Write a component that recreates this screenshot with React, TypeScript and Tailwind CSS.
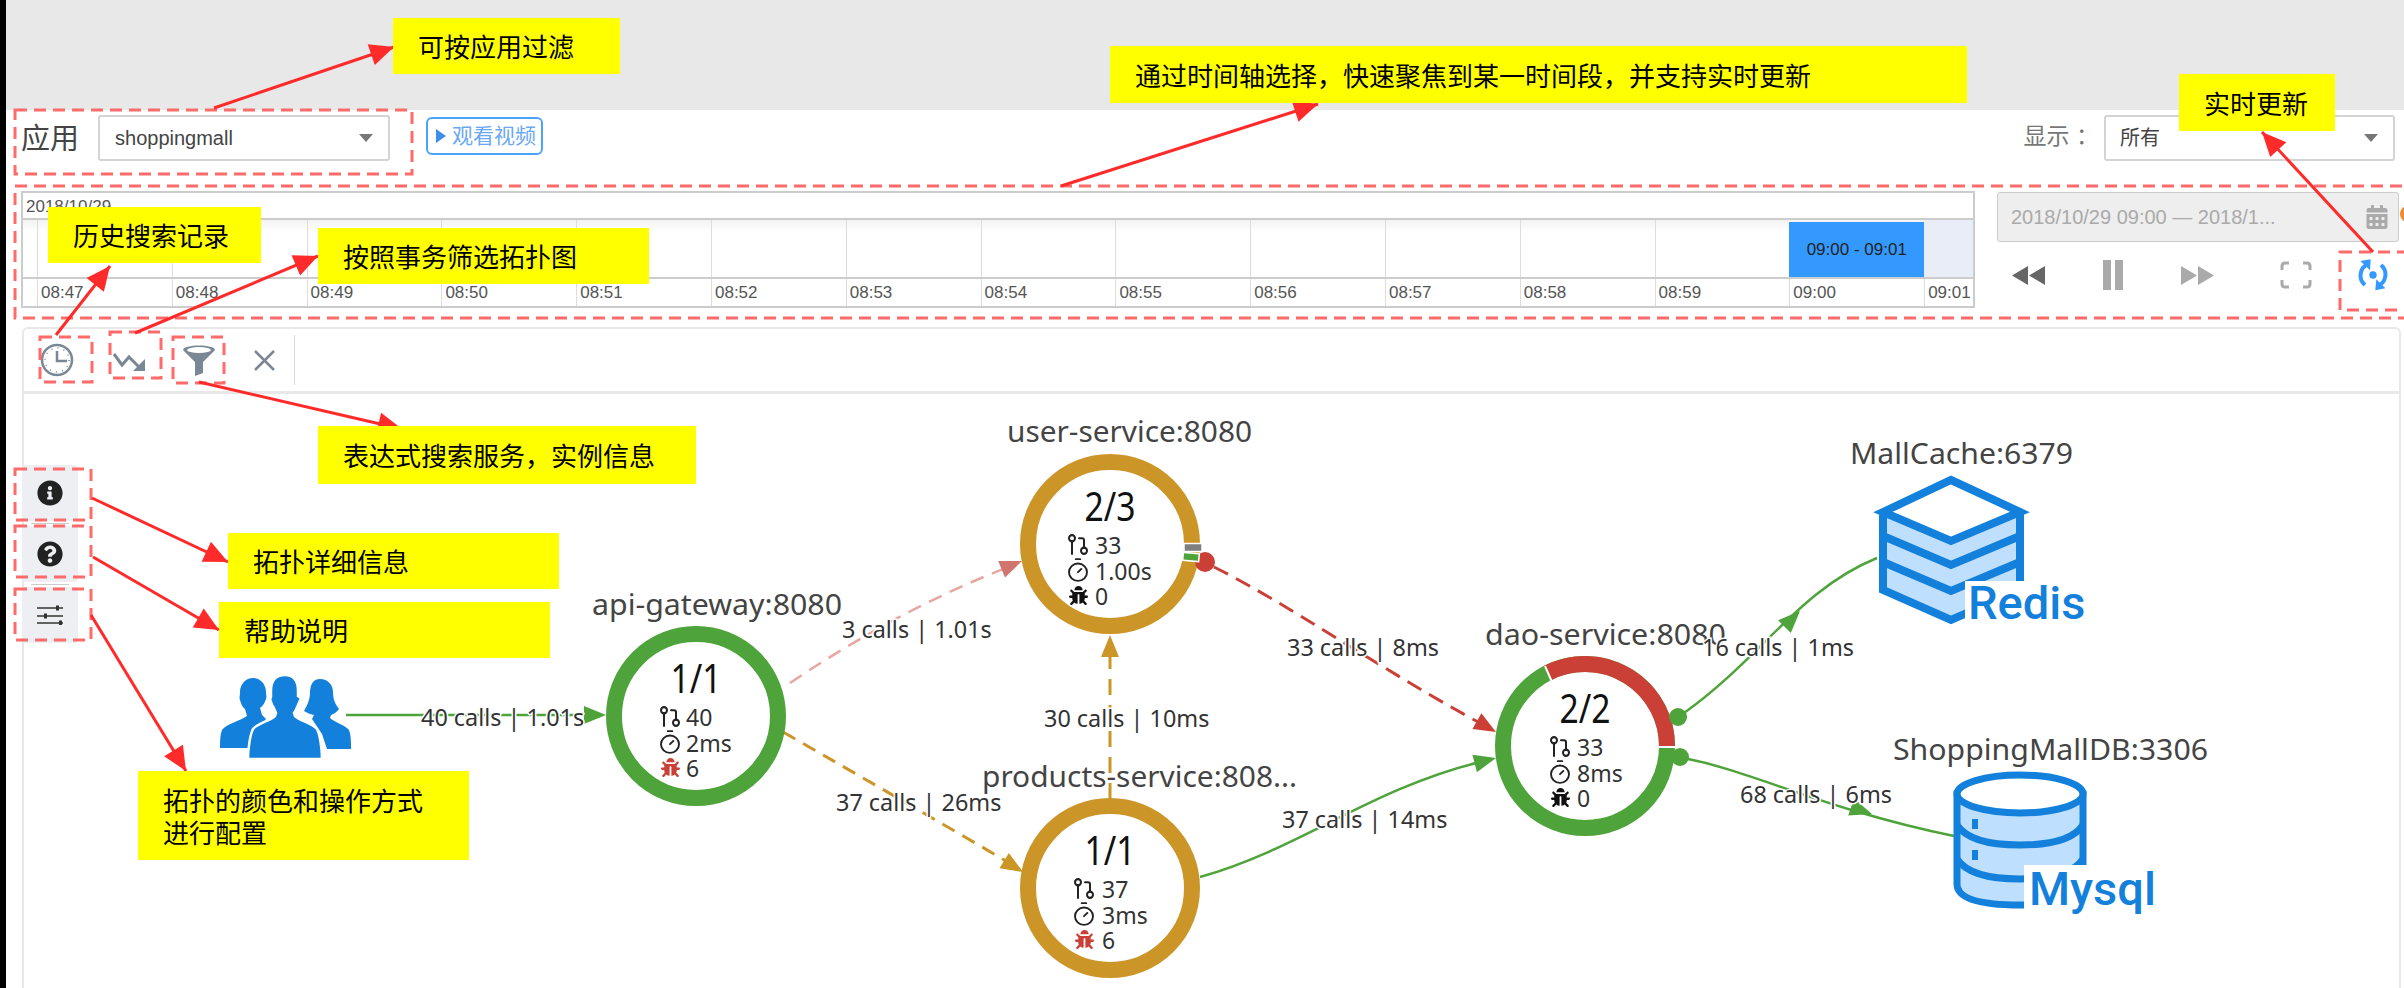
import React from 'react';
import { GitPullRequest, Timer } from 'lucide-react';
import { FaBug, FaCalendarAlt, FaInfoCircle, FaQuestionCircle } from 'react-icons/fa';

const GREEN = '#4ea43a';
const ORANGE = '#cc9528';
const RED = '#cb4036';
const BLUE = '#1380dc';
const TIMES = ['08:47', '08:48', '08:49', '08:50', '08:51', '08:52', '08:53', '08:54', '08:55', '08:56', '08:57', '08:58', '08:59', '09:00', '09:01'];

const NOTES = [
    { text: '可按应用过滤', cls: 'left-[393px] top-[18px] w-[227px] h-[56px]' },
    { text: '通过时间轴选择，快速聚焦到某一时间段，并支持实时更新', cls: 'left-[1110px] top-[46px] w-[857px] h-[57px]' },
    { text: '实时更新', cls: 'left-[2179px] top-[74px] w-[156px] h-[57px]' },
    { text: '历史搜索记录', cls: 'left-[48px] top-[207px] w-[213px] h-[56px]' },
    { text: '按照事务筛选拓扑图', cls: 'left-[318px] top-[228px] w-[331px] h-[56px]' },
    { text: '表达式搜索服务，实例信息', cls: 'left-[318px] top-[426px] w-[378px] h-[58px]' },
    { text: '拓扑详细信息', cls: 'left-[228px] top-[533px] w-[331px] h-[56px]' },
    { text: '帮助说明', cls: 'left-[219px] top-[602px] w-[331px] h-[56px]' },
    { text: '拓扑的颜色和操作方式\n进行配置', cls: 'left-[138px] top-[771px] w-[331px] h-[89px]' },
];

const DASHED = [
    [15, 110, 397, 64], [15, 186, 2395, 132], [2340, 252, 66, 58],
    [40, 337, 52, 45], [110, 332, 51, 46], [173, 337, 51, 46],
    [15, 469, 76, 51], [15, 526, 76, 51], [15, 589, 76, 51],
];

const ARROWS = [
    [214, 108, 394, 47], [1061, 186, 1318, 104], [2373, 252, 2262, 132],
    [56, 335, 110, 266], [135, 333, 318, 256], [199, 382, 402, 429],
    [92, 498, 228, 562], [93, 557, 219, 630], [91, 615, 186, 771],
];

const NODES = [
    { cx: 696, cy: 717, ratio: '1/1', calls: '40', time: '2ms', bugs: '6', bugColor: RED, color: GREEN, ix: 661, tx: 686 },
    { cx: 1110, cy: 545, ratio: '2/3', calls: '33', time: '1.00s', bugs: '0', bugColor: '#111', color: ORANGE, ix: 1069, tx: 1095 },
    { cx: 1110, cy: 889, ratio: '1/1', calls: '37', time: '3ms', bugs: '6', bugColor: RED, color: ORANGE, ix: 1075, tx: 1102 },
    { cx: 1585, cy: 747, ratio: '2/2', calls: '33', time: '8ms', bugs: '0', bugColor: '#111', color: GREEN, ix: 1551, tx: 1577 },
];

const LABELS = [
    { text: 'api-gateway:8080', x: 592, end: 842, y: 604 },
    { text: 'user-service:8080', x: 1007, end: 1252, y: 431 },
    { text: 'products-service:808...', x: 982, end: 1297, y: 776 },
    { text: 'dao-service:8080', x: 1485, end: 1726, y: 634 },
    { text: 'MallCache:6379', x: 1850, end: 2073, y: 453 },
    { text: 'ShoppingMallDB:3306', x: 1893, end: 2208, y: 749 },
];

const EDGE_LABELS = [
    { text: '3 calls | 1.01s', x: 842, y: 630 },
    { text: '37 calls | 26ms', x: 836, y: 803 },
    { text: '30 calls | 10ms', x: 1044, y: 719 },
    { text: '33 calls | 8ms', x: 1287, y: 648 },
    { text: '37 calls | 14ms', x: 1282, y: 820 },
    { text: '16 calls | 1ms', x: 1702, y: 648 },
    { text: '68 calls | 6ms', x: 1740, y: 795 },
    { text: '40 calls | 1.01s', x: 421, y: 718 },
];

// triangle with its point at (x2, y2), aimed along the line from (x1, y1)
const headPoints = (x1: number, y1: number, x2: number, y2: number, len: number, half: number) => {
    const d = Math.hypot(x2 - x1, y2 - y1);
    const ux = (x2 - x1) / d;
    const uy = (y2 - y1) / d;
    const bx = x2 - ux * len;
    const by = y2 - uy * len;
    return `${x2},${y2} ${bx - uy * half},${by + ux * half} ${bx + uy * half},${by - ux * half}`;
};

const Annotations = () => (
    <svg className="absolute left-0 top-0 w-[2404px] h-[988px] pointer-events-none" viewBox="0 0 2404 988">
        <circle cx="2408" cy="214" r="8" fill="#f08a30" />
        {DASHED.map(([x, y, w, h]) => (
            <rect key={`${x}-${y}`} x={x} y={y} width={w} height={h} fill="none" stroke="#ff6b6b" strokeWidth="3" strokeDasharray="12 7" />
        ))}
        {ARROWS.map(([x1, y1, x2, y2]) => (
            <g key={`${x1}-${y1}`}>
                <line x1={x1} y1={y1} x2={x2} y2={y2} stroke="#ff2a2a" strokeWidth="3" />
                <polygon points={headPoints(x1, y1, x2, y2, 24, 11)} fill="#ff2a2a" />
            </g>
        ))}
    </svg>
);

const Node = ({ cx, cy, ratio, calls, time, bugs, bugColor, color, ix, tx }: (typeof NODES)[number]) => (
    <g>
        <circle cx={cx} cy={cy} r="82" fill="white" stroke={color} strokeWidth="16" />
        <text x={cx} y={cy - 39} textAnchor="middle" dominantBaseline="central" textLength="51" lengthAdjust="spacingAndGlyphs" className="text-[40px] fill-[#111]">{ratio}</text>
        <GitPullRequest x={ix - 3} y={cy - 12} width={24} height={25} stroke="#222" strokeWidth={2} preserveAspectRatio="none" />
        <text x={tx} y={cy + 1} dominantBaseline="central" className="text-[23px] fill-[#333]">{calls}</text>
        <Timer x={ix - 4.5} y={cy + 13} width={27} height={26} stroke="#222" strokeWidth={1.7} preserveAspectRatio="none" />
        <text x={tx} y={cy + 27} dominantBaseline="central" className="text-[23px] fill-[#333]">{time}</text>
        <FaBug x={ix} y={cy + 42} size={19} color={bugColor} />
        <text x={tx} y={cy + 52} dominantBaseline="central" className="text-[23px] fill-[#333]">{bugs}</text>
    </g>
);

const Head = ({ from, to, color }: { from: number[]; to: number[]; color: string }) => (
    <polygon points={headPoints(from[0], from[1], to[0], to[1], 22, 9)} fill={color} />
);

const UsersIcon = () => (
    <g fill={BLUE}>
        <path d="M320 680C313 680 310 686 310 694C310 700 307 707 304 712C307 714 310 715 314 716L312 720L322 735L327 750H351C351 742 351 736 349 731C345 726 334 723 330 719L331 716C334 715 337 713 339 710C335 705 333 700 333 693C333 686 328 680 320 680Z" />
        <path d="M253 679C246 679 240 685 240 693C240 697 239 699 240 701C241 704 242 708 245 710L247 717C240 722 226 725 222 731C220 736 220 742 220 749H250L253 735L262 726L266 720L262 716L260 709C263 707 265 703 266 700C267 698 266 696 266 693C266 685 260 679 253 679Z" />
        <path d="M285 676C276 676 271 682 271 692V698L270 700L272 706C274 708 275 712 276 714L275 717C270 722 258 724 253 730C250 736 248 750 248 760H322C322 750 320 736 317 730C312 724 300 722 295 717L294 714C296 712 297 708 298 706L301 699L298 697V692C298 682 294 676 285 676Z" stroke="white" strokeWidth="2.5" />
    </g>
);

const RedisIcon = () => (
    <g>
        <polygon points="1883,513 1951,481 2020,513 2020,591 1951,621 1883,591" fill="#bfdfff" />
        <polygon points="1883,513 1951,481 2020,513 1951,542" fill="white" />
        <g fill="none" stroke={BLUE} strokeWidth="8" strokeLinejoin="miter">
            <polygon points="1883,513 1951,481 2020,513 1951,542" />
            <polyline points="1883,513 1883,591 1951,621 2020,591 2020,513" />
            <polyline points="1883,537 1951,566 2020,537" />
            <polyline points="1883,563 1951,592 2020,563" />
        </g>
        <rect x="1965" y="582" width="66" height="45" fill="white" />
        <text x="1968" y="620" className="text-[47px] font-medium fill-[#1380dc] font-['Roboto',sans-serif]">Redis</text>
    </g>
);

const MysqlIcon = () => (
    <g>
        <path d="M1957 795V885Q1957 906 2020 906Q2083 906 2083 885V795Z" fill="#bfdfff" stroke={BLUE} strokeWidth="7" />
        <ellipse cx="2020" cy="795" rx="63" ry="19" fill="white" stroke={BLUE} strokeWidth="7" />
        <path d="M1957 826Q1970 846 2020 846Q2070 846 2083 826M1957 860Q1970 880 2020 880Q2070 880 2083 860" fill="none" stroke={BLUE} strokeWidth="7" />
        <rect x="1972" y="820" width="6" height="10" fill={BLUE} />
        <rect x="1972" y="851" width="6" height="10" fill={BLUE} />
        <rect x="2024" y="866" width="66" height="46" fill="white" />
        <text x="2029" y="906" className="text-[47px] font-medium fill-[#1380dc] font-['Roboto',sans-serif]">Mysql</text>
    </g>
);

const Graph = () => (
    <svg className="absolute left-0 top-0 w-[2378px] h-[593px] font-['Noto_Sans',sans-serif]" viewBox="24 395 2378 593">
        <line x1="346" y1="716" x2="590" y2="716" stroke={GREEN} strokeWidth="2.5" />
        <Head from={[570, 716]} to={[606, 716]} color={GREEN} />
        <path d="M790 684Q900 610 1006 569" fill="none" stroke="#e8a6a0" strokeWidth="2.5" strokeDasharray="14 9" />
        <Head from={[990, 575]} to={[1022, 562]} color="#d0766f" />
        <path d="M783 733Q900 800 1006 862" fill="none" stroke={ORANGE} strokeWidth="3" strokeDasharray="14 9" />
        <Head from={[990, 853]} to={[1023, 873]} color={ORANGE} />
        <line x1="1110" y1="800" x2="1110" y2="650" stroke={ORANGE} strokeWidth="3" strokeDasharray="16 10" />
        <Head from={[1110, 670]} to={[1110, 636]} color={ORANGE} />
        <path d="M1214 568C1290 606 1380 670 1480 724" fill="none" stroke={RED} strokeWidth="3" strokeDasharray="16 9" />
        <Head from={[1468, 717]} to={[1496, 733]} color={RED} />
        <path d="M1200 878C1300 850 1370 790 1480 763" fill="none" stroke={GREEN} strokeWidth="2.5" />
        <Head from={[1465, 767]} to={[1496, 759]} color={GREEN} />
        <path d="M1684 714C1760 660 1800 590 1877 559" fill="none" stroke={GREEN} strokeWidth="2.5" />
        <Head from={[1780, 632]} to={[1800, 612]} color={GREEN} />
        <path d="M1688 760C1750 772 1830 812 1954 837" fill="none" stroke={GREEN} strokeWidth="2.5" />
        <Head from={[1845, 806]} to={[1872, 815]} color={GREEN} />

        {NODES.map((n) => (
            <Node key={`${n.cx}-${n.cy}`} {...n} />
        ))}

        {/* user-service ring: gray and green slices, dao-service ring: red arc */}
        <circle cx="1205" cy="563" r="10" fill={RED} />
        <rect x="1184" y="544.5" width="18" height="8" fill="#7f7f7f" stroke="white" strokeWidth="1.5" />
        <rect x="1183" y="554" width="16" height="8" fill={GREEN} stroke="white" strokeWidth="1.5" transform="rotate(5 1191 558)" />
        <path d="M1547.8 674A82 82 0 0 1 1667 747" fill="none" stroke={RED} strokeWidth="16" />
        <line x1="1545" y1="667" x2="1552" y2="683" stroke="white" strokeWidth="2" />
        <line x1="1658" y1="748" x2="1677" y2="748" stroke="white" strokeWidth="2" />
        <circle cx="1678" cy="718" r="9" fill={GREEN} />
        <circle cx="1680" cy="758" r="9" fill={GREEN} />

        <UsersIcon />
        <RedisIcon />
        <MysqlIcon />

        {LABELS.map((l) => (
            <text key={l.text} x={l.x} y={l.y} dominantBaseline="central" textLength={l.end - l.x} lengthAdjust="spacingAndGlyphs" className="text-[29px] fill-[#444]">{l.text}</text>
        ))}
        {EDGE_LABELS.map((l) => (
            <text key={l.text + l.x} x={l.x} y={l.y} dominantBaseline="central" stroke="white" strokeWidth="3" paintOrder="stroke" className="text-[23.4px] fill-[#333]">{l.text}</text>
        ))}
    </svg>
);

const ClockIcon = () => (
    <svg className="w-[34px] h-[34px]" viewBox="0 0 34 34">
        <circle cx="17" cy="17" r="15" fill="white" stroke="#7a8794" strokeWidth="2.5" />
        <circle cx="17" cy="17" r="12" fill="none" stroke="#7a8794" strokeWidth="1.5" strokeDasharray="1 5.3" />
        <path d="M17 8V18H27" fill="none" stroke="#7a8794" strokeWidth="2.5" />
    </svg>
);

const TrendIcon = () => (
    <svg className="w-[32px] h-[20px]" viewBox="0 0 32 20">
        <polyline points="1,2 9,13 16,5 27,16" fill="none" stroke="#7a8794" strokeWidth="3" />
        <polygon points="20,19 32,19 32,7" fill="#7a8794" />
    </svg>
);

const FunnelIcon = () => (
    <svg className="w-[32px] h-[32px]" viewBox="0 0 32 32">
        <path d="M0 6C0 0 32 0 32 6L20 18V29L12 32V18Z" fill="#7a8794" />
        <ellipse cx="16" cy="6" rx="12" ry="3" fill="white" />
    </svg>
);

const SlidersIcon = () => (
    <svg className="w-[26px] h-[20px]" viewBox="0 0 26 20">
        <g stroke="#333" strokeWidth="1.5">
            <line x1="0" y1="3" x2="26" y2="3" />
            <line x1="0" y1="11" x2="26" y2="11" />
            <line x1="0" y1="18" x2="26" y2="18" />
        </g>
        <g fill="#333">
            <rect x="19" y="0.5" width="3" height="5" />
            <rect x="7" y="8.5" width="3" height="5" />
            <rect x="22" y="15.5" width="3" height="5" />
        </g>
    </svg>
);

const SyncIcon = () => (
    <svg className="w-[30px] h-[32px]" viewBox="0 0 30 32">
        <path d="M7 26A12.5 12.5 0 0 1 10 5M23 6A12.5 12.5 0 0 1 20 27" fill="none" stroke="#3399ff" strokeWidth="4" />
        <polygon points="2.3,2 12.7,0.3 12,11.3" fill="#3399ff" />
        <polygon points="27.3,29.3 17.3,31.3 18.3,20.3" fill="#3399ff" />
        <circle cx="15" cy="16" r="3.7" fill="#3399ff" />
    </svg>
);

const SelectBox = ({ children, className }: { children: React.ReactNode; className: string }) => (
    <div className={`h-[46px] flex items-center justify-between border-2 border-[#d4d4d4] rounded-[3px] bg-white text-[20px] text-[#444] ${className}`}>
        {children}
        <span className="w-0 h-0 border-x-[7px] border-x-transparent border-t-[8px] border-t-[#777]" />
    </div>
);

const Timeline = () => (
    <div className="w-[1954px] h-[117px] flex flex-col border-2 border-[#ccc] text-[17px] text-[#555]">
        <div className="h-[27px] shrink-0 border-b-2 border-[#ccc] px-[3px] leading-[27px]">2018/10/29</div>
        <div className="h-[59px] shrink-0 grid grid-cols-[14px_repeat(13,134.8px)_134.8px_1fr] border-b-2 border-[#ccc] bg-gradient-to-b from-[#f3f3f3] to-white to-[12px]">
            <div />
            {TIMES.slice(0, 13).map((t) => (
                <div key={t} className="border-l border-[#ddd]" />
            ))}
            <div className="mt-[2px] bg-[#3399ff] flex items-center justify-center text-[#222]">09:00 - 09:01</div>
            <div className="bg-[#e8edf8]" />
        </div>
        <div className="flex-1 grid grid-cols-[14px_repeat(14,134.8px)_1fr]">
            <div />
            {TIMES.map((t) => (
                <div key={t} className="border-l border-[#ddd] pl-[3px] leading-[27px]">{t}</div>
            ))}
        </div>
    </div>
);

const TimePanel = () => (
    <div className="w-[402px]">
        <div className="h-[50px] flex items-center justify-between pl-[13px] pr-[9px] bg-[#eeeeee] border border-[#ccc] rounded-[3px] text-[20px] text-[#aaa] whitespace-nowrap">
            2018/10/29 09:00 — 2018/1...
            <FaCalendarAlt className="text-[24px] text-[#aaa]" />
        </div>
        <div className="h-[66px] flex items-center">
            <svg className="ml-[15px] w-[33px] h-[19px]" viewBox="0 0 33 19"><polygon points="0,9.5 16,0 16,19" fill="#666" /><polygon points="17,9.5 33,0 33,19" fill="#666" /></svg>
            <div className="ml-[58px] w-[20px] h-[30px] flex justify-between">
                <div className="w-[8px] bg-[#aaa]" />
                <div className="w-[8px] bg-[#aaa]" />
            </div>
            <svg className="ml-[58px] w-[33px] h-[19px]" viewBox="0 0 33 19"><polygon points="0,0 16,9.5 0,19" fill="#aaa" /><polygon points="17,0 33,9.5 17,19" fill="#aaa" /></svg>
            <svg className="ml-[66px] w-[32px] h-[28px]" viewBox="0 0 32 28">
                <path d="M2 9V5Q2 2 5 2H9M23 2H27Q30 2 30 5V9M30 19V23Q30 26 27 26H23M9 26H5Q2 26 2 23V19" fill="none" stroke="#aaa" strokeWidth="3" />
            </svg>
            <div className="ml-[46px]"><SyncIcon /></div>
        </div>
    </div>
);

const SideTabs = () => (
    <div className="absolute left-[-2px] top-[71px] w-[56px] flex flex-col items-center gap-[2px]">
        <div className="w-full h-[56px] bg-[#edeff2] rounded-[4px] flex items-center justify-center"><FaInfoCircle className="text-[26px] text-[#222]" /></div>
        <div className="w-[38px] h-px bg-[#ccc]" />
        <div className="w-full h-[56px] bg-[#edeff2] rounded-[4px] flex items-center justify-center"><FaQuestionCircle className="text-[26px] text-[#222]" /></div>
        <div className="w-[38px] h-px bg-[#ccc]" />
        <div className="w-full h-[56px] bg-[#edeff2] rounded-[4px] flex items-center justify-center"><SlidersIcon /></div>
    </div>
);

const TopoCard = () => (
    <div className="mt-[19px] ml-[16px] w-[2379px] h-[661px] flex flex-col border-2 border-b-0 border-[#e8e8e8] rounded-t-[6px]">
        <div className="h-[65px] shrink-0 flex items-center border-b-[3px] border-[#e8e8e8]">
            <div className="ml-[16px]"><ClockIcon /></div>
            <div className="ml-[39px] mt-[3px]"><TrendIcon /></div>
            <div className="ml-[38px]"><FunnelIcon /></div>
            <svg className="ml-[39px] w-[21px] h-[21px]" viewBox="0 0 21 21"><path d="M1 1L20 20M20 1L1 20" stroke="#7a8794" strokeWidth="2.5" /></svg>
            <div className="ml-[19px] w-px h-[50px] bg-[#ddd]" />
        </div>
        <div className="relative flex-1">
            <Graph />
            <SideTabs />
        </div>
    </div>
);

export default function App() {
    return (
        <div className="relative w-[2404px] h-[988px] overflow-hidden flex bg-white font-['Liberation_Sans','Noto_Sans_CJK_SC',sans-serif]">
            <div className="w-[6px] bg-black shrink-0" />
            <div className="flex-1 flex flex-col">
                <div className="h-[110px] shrink-0 bg-[#e8e8e8]" />
                <div className="h-[81px] shrink-0 flex items-start pt-[5px] pl-[15px]">
                    <span className="mt-[7px] text-[29px] leading-[34px] text-[#444]">应用</span>
                    <SelectBox className="ml-[19px] w-[292px] pl-[15px] pr-[15px]">shoppingmall</SelectBox>
                    <button className="ml-[36px] mt-[2px] w-[117px] h-[38px] flex items-center gap-[6px] pl-[8px] border-2 border-[#4aa3ff] rounded-[6px] text-[21px] text-[#6aa9f5]">
                        <span className="w-0 h-0 border-y-[7px] border-y-transparent border-l-[10px] border-l-[#3d8fe8]" />
                        观看视频
                    </button>
                    <span className="ml-auto mt-[6px] text-[23px] leading-[30px] text-[#777] whitespace-nowrap">显示 ：</span>
                    <SelectBox className="ml-[5px] mr-[9px] w-[291px] pl-[14px] pr-[15px]">所有</SelectBox>
                </div>
                <div className="h-[117px] shrink-0 flex pl-[15px]">
                    <Timeline />
                    <div className="ml-[22px] mt-[1px]"><TimePanel /></div>
                </div>
                <TopoCard />
            </div>
            <Annotations />
            {NOTES.map((note) => (
                <div key={note.text} className={`absolute flex items-center pl-[25px] bg-[#ffff00] text-[26px] leading-[32px] text-black whitespace-pre-line font-['Noto_Sans_CJK_SC',sans-serif] ${note.cls}`}>
                    {note.text}
                </div>
            ))}
        </div>
    );
}
